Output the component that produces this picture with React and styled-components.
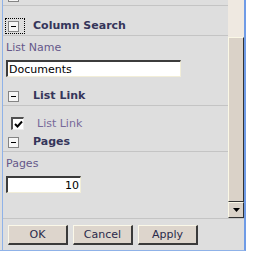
import React from 'react';
import styled, { createGlobalStyle } from 'styled-components';

const Global = createGlobalStyle`
  html, body { margin: 0; padding: 0; background: #ffffff; }
  body { font-family: "DejaVu Sans", Verdana, sans-serif; font-size: 11px; }
  * { box-sizing: border-box; }
`;

const Frame = styled.div`
  width: 246px;
  height: 251px;
  padding-left: 2px;
  background: #dedede;
  border-right: 2px solid #6f9be6;
  border-bottom: 1px solid #8fb2e8;
  display: flex;
`;

const Inner = styled.div`
  flex: 1;
  min-width: 0;
  border-left: 1px solid #8fb2e8;
  display: flex;
  flex-direction: column;
`;

const Panel = styled.div`
  height: 218px;
  display: flex;
`;

const Content = styled.div`
  width: 225px;
  overflow: hidden;
`;

const Scrolled = styled.div`
  margin-top: -13px;
`;

const Section = styled.div`
  padding-bottom: ${p => p.$after}px;
`;

const Header = styled.div`
  height: 19px;
  display: flex;
  align-items: center;
  gap: 8px;
  padding-left: 2px;
  border-bottom: 1px solid #c4c4c4;
  color: #35355a;
  font-weight: bold;
  font-size: 11px;
  line-height: 14px;
`;

const Toggle = styled.span`
  width: 20px;
  height: 16px;
  display: flex;
  padding: 2px 0 0 2px;
  border: 1px dotted ${p => (p.$focused ? '#000000' : 'transparent')};
`;

const MinusBox = styled.span`
  width: 11px;
  height: 11px;
  border: 1px solid #848484;
  background: #f6f6f6;
  display: flex;
  align-items: center;
  justify-content: center;
  &::after {
    content: '';
    width: 5px;
    height: 1px;
    background: #000000;
  }
`;

const Body = styled.div`
  padding: ${p => p.$top}px 0 0 3px;
`;

const Label = styled.div`
  height: 14px;
  line-height: 14px;
  color: #65588a;
  font-size: 11px;
`;

const TextInput = styled.input`
  display: block;
  margin-top: 5px;
  width: ${p => p.$w}px;
  height: 17px;
  padding: 0 1px;
  background: #ffffff;
  border-style: solid;
  border-width: 2px 1px 1px 2px;
  border-color: #3c3c3c #f2eed8 #f2eed8 #3c3c3c;
  font-family: "DejaVu Sans", Verdana, sans-serif;
  font-size: 11px;
  color: #000000;
  text-align: ${p => p.$align || 'left'};
  outline: none;
`;

const CheckRow = styled.label`
  display: flex;
  align-items: center;
  gap: 13px;
  padding-left: 5px;
  height: 13px;
  color: #76699a;
  font-size: 11px;
`;

const CheckBox = styled.span`
  width: 13px;
  height: 13px;
  background: #ffffff;
  border-style: solid;
  border-width: 2px 1px 1px 2px;
  border-color: #505050 #ececec #ececec #505050;
  display: flex;
  align-items: center;
  justify-content: center;
`;

const ScrollBar = styled.div`
  width: 16px;
  display: flex;
  flex-direction: column;
`;

const Track = styled.div`
  height: 37px;
  background: #efe9e1;
`;

const Thumb = styled.div`
  flex: 1;
  background: #dad2c8;
  border-style: solid;
  border-width: 1px;
  border-color: #fbf8e6 #333333 #333333 #fbf8e6;
`;

const ArrowButton = styled.div`
  height: 16px;
  background: #dad2c8;
  border-style: solid;
  border-width: 1px;
  border-color: #fbf8e6 #333333 #333333 #fbf8e6;
  display: flex;
  align-items: center;
  justify-content: center;
`;

const Toolbar = styled.div`
  flex: 1;
  border-top: 1px solid #c4c4c4;
  display: flex;
  gap: 5px;
  padding: 6px 0 0 5px;
`;

const Button = styled.button`
  width: 60px;
  height: 20px;
  padding: 0;
  background: #ddd5cc;
  border-style: solid;
  border-width: 1px 2px 2px 1px;
  border-color: #fbf8e8 #3a3a3a #3a3a3a #fbf8e8;
  font-family: "DejaVu Sans", Verdana, sans-serif;
  font-size: 11px;
  color: #2a2a4a;
`;

function SectionHeader({ title, focused }) {
  return (
    <Header>
      <Toggle $focused={focused}>
        <MinusBox />
      </Toggle>
      <span>{title}</span>
    </Header>
  );
}

export default function App() {
  return (
    <>
      <Global />
      <Frame>
        <Inner>
          <Panel>
            <Content>
              <Scrolled>
                <Section $after={11}>
                  <SectionHeader title="Advanced" />
                </Section>
                <Section $after={10}>
                  <SectionHeader title="Column Search" focused />
                  <Body $top={5}>
                    <Label>List Name</Label>
                    <TextInput $w={175} readOnly value="Documents" />
                  </Body>
                </Section>
                <Section $after={3}>
                  <SectionHeader title="List Link" />
                  <Body $top={11}>
                    <CheckRow>
                      <CheckBox>
                        <svg width="9" height="9" viewBox="0 0 9 9">
                          <path d="M1 4 L3.5 6.5 L8 1.5" fill="none" stroke="#000" strokeWidth="2" />
                        </svg>
                      </CheckBox>
                      <span>List Link</span>
                    </CheckRow>
                  </Body>
                </Section>
                <Section $after={0}>
                  <SectionHeader title="Pages" />
                  <Body $top={5}>
                    <Label>Pages</Label>
                    <TextInput $w={75} $align="right" readOnly value="10" />
                  </Body>
                </Section>
              </Scrolled>
            </Content>
            <ScrollBar>
              <Track />
              <Thumb />
              <ArrowButton>
                <svg width="7" height="4" viewBox="0 0 7 4">
                  <path d="M0 0 H7 L3.5 4 Z" fill="#000" />
                </svg>
              </ArrowButton>
            </ScrollBar>
          </Panel>
          <Toolbar>
            <Button>OK</Button>
            <Button>Cancel</Button>
            <Button>Apply</Button>
          </Toolbar>
        </Inner>
      </Frame>
    </>
  );
}
